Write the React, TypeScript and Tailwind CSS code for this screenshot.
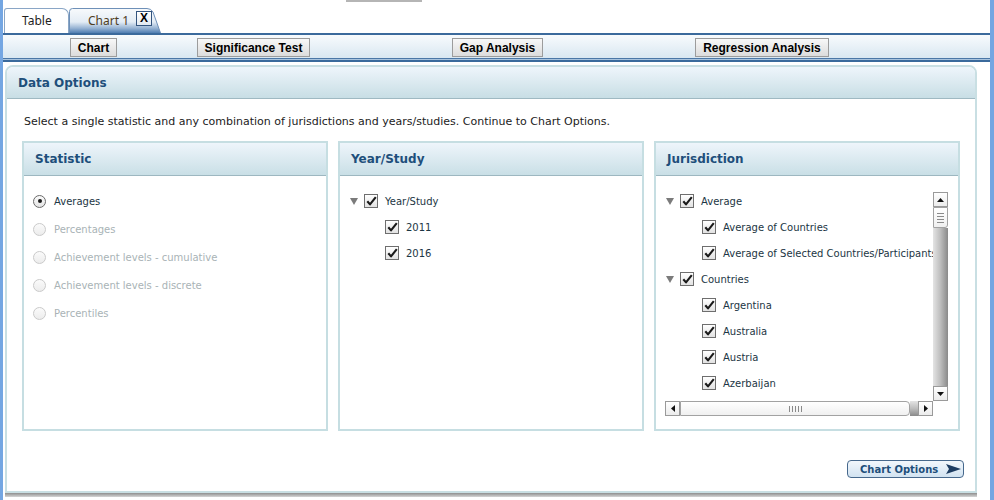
import React from "react";

const Check = () => (
  <span className="w-[14px] h-[14px] border border-[#6e6e6e] bg-gradient-to-b from-white to-[#e2e2e2] flex items-center justify-center shrink-0">
    <svg width="11" height="10" viewBox="0 0 11 10">
      <path d="M1.3 5.2 L4 8.4 L9.8 1.2" fill="none" stroke="#1a1a1a" strokeWidth="2.1" strokeLinejoin="round" />
    </svg>
  </span>
);

const Caret = () => (
  <svg width="8" height="7" viewBox="0 0 8 7" className="shrink-0">
    <polygon points="0,0 8,0 4,7" fill="#7b7b7b" />
  </svg>
);

const Radio = ({ on }: { on?: boolean }) => (
  <span
    className={
      on
        ? "w-[13px] h-[13px] rounded-full border border-[#6a6a6a] bg-gradient-to-b from-[#fbfbfb] to-[#e4e4e4] flex items-center justify-center shrink-0"
        : "w-[13px] h-[13px] rounded-full border border-[#cacaca] bg-gradient-to-b from-[#fbfbfb] to-[#ececec] flex items-center justify-center shrink-0"
    }
  >
    {on && <span className="w-[4px] h-[4px] rounded-full bg-[#1a1a1a]" />}
  </span>
);

const ToolButton = ({ label, className }: { label: string; className: string }) => (
  <button
    className={`h-[19px] border border-[#9c9c9c] bg-gradient-to-b from-[#f8f8f8] to-[#dcdcdc] font-['Liberation_Sans',Arial,sans-serif] font-bold text-[12px] leading-none text-black flex items-center justify-center ${className}`}
  >
    {label}
  </button>
);

const PanelHead = ({ title }: { title: string }) => (
  <div className="h-[33px] shrink-0 bg-gradient-to-b from-[#eef5fb] to-[#c9dfe6] border-b border-[#9db7c0] flex items-center pl-[11px]">
    <span className="font-bold text-[12px] text-[#1e4f7b]">{title}</span>
  </div>
);

const ParentRow = ({ label }: { label: string }) => (
  <div className="h-[18px] shrink-0 flex items-center">
    <Caret />
    <span className="ml-[6px]">
      <Check />
    </span>
    <span className="ml-[7px] whitespace-nowrap">{label}</span>
  </div>
);

const ChildRow = ({ label, indent }: { label: string; indent: string }) => (
  <div className={`h-[18px] shrink-0 flex items-center ${indent}`}>
    <Check />
    <span className="ml-[7px] whitespace-nowrap">{label}</span>
  </div>
);

const stats = [
  "Averages",
  "Percentages",
  "Achievement levels - cumulative",
  "Achievement levels - discrete",
  "Percentiles",
];

const VScroll = () => (
  <div className="w-[15px] h-[209px] flex flex-col">
    <div className="h-[15px] border border-[#9a9a9a] bg-gradient-to-b from-white to-[#ececec] flex items-center justify-center">
      <svg width="7" height="4" viewBox="0 0 7 4"><polygon points="0,4 7,4 3.5,0" fill="#111" /></svg>
    </div>
    <div className="h-[21px] border border-[#a2a2a2] rounded-br-[3px] bg-gradient-to-b from-white to-[#f0f0f0] flex flex-col items-center justify-center gap-[2px]">
      <span className="w-[7px] h-px bg-[#8a8a8a]" />
      <span className="w-[7px] h-px bg-[#8a8a8a]" />
      <span className="w-[7px] h-px bg-[#8a8a8a]" />
      <span className="w-[7px] h-px bg-[#8a8a8a]" />
    </div>
    <div className="flex-1 bg-gradient-to-r from-[#e4e4e4] via-[#bdbdbd] to-[#8a8a8a]" />
    <div className="h-[15px] border border-[#9a9a9a] bg-gradient-to-b from-white to-[#ececec] flex items-center justify-center">
      <svg width="7" height="4" viewBox="0 0 7 4"><polygon points="0,0 7,0 3.5,4" fill="#111" /></svg>
    </div>
  </div>
);

const HScroll = () => (
  <div className="w-[268px] h-[15px] flex">
    <div className="w-[15px] border border-[#9a9a9a] bg-gradient-to-b from-white to-[#ececec] flex items-center justify-center">
      <svg width="4" height="7" viewBox="0 0 4 7"><polygon points="4,0 4,7 0,3.5" fill="#111" /></svg>
    </div>
    <div className="w-[230px] border border-[#a2a2a2] rounded-r-[4px] bg-gradient-to-b from-white to-[#f0f0f0] flex items-center justify-center gap-[2px]">
      <span className="w-px h-[6px] bg-[#8a8a8a]" />
      <span className="w-px h-[6px] bg-[#8a8a8a]" />
      <span className="w-px h-[6px] bg-[#8a8a8a]" />
      <span className="w-px h-[6px] bg-[#8a8a8a]" />
      <span className="w-px h-[6px] bg-[#8a8a8a]" />
    </div>
    <div className="flex-1 bg-gradient-to-b from-[#e4e4e4] via-[#bdbdbd] to-[#8a8a8a]" />
    <div className="w-[15px] border border-[#9a9a9a] bg-gradient-to-b from-white to-[#ececec] flex items-center justify-center">
      <svg width="4" height="7" viewBox="0 0 4 7"><polygon points="0,0 0,7 4,3.5" fill="#111" /></svg>
    </div>
  </div>
);

export default function App() {
  return (
    <div className="w-[994px] h-[500px] bg-white border-l-[3px] border-r-[4px] border-[#74a6e2] overflow-hidden flex flex-col font-['DejaVu_Sans',Verdana,sans-serif]">
      {/* tab strip */}
      <div className="h-[33px] shrink-0">
        <div className="h-[2px] w-[76px] ml-[343px] bg-[#b5b5b5]" />
        <div className="mt-[6px] h-[25px] flex items-end pl-[1px] font-['Noto_Sans',sans-serif] text-[12px]">
          <div className="w-[65px] h-[25px] bg-white border border-b-0 border-[#8aa6c6] rounded-tl-[3px] rounded-tr-[7px] flex items-center pl-[17px] text-[#1e1e1e]">
            Table
          </div>
          <div className="relative w-[92px] h-[25px] flex items-center">
            <svg width="92" height="25" viewBox="0 0 92 25" className="absolute inset-0">
              <defs>
                <linearGradient id="tabg" x1="0" y1="0" x2="0" y2="1">
                  <stop offset="0" stopColor="#f8fafc" />
                  <stop offset="0.55" stopColor="#e3ecf5" />
                  <stop offset="0.8" stopColor="#98b4d4" />
                  <stop offset="1" stopColor="#4f7db1" />
                </linearGradient>
              </defs>
              <path d="M0.5 25 V3.5 Q0.5 0.5 3.5 0.5 H78 Q82 0.5 84 4 L91.5 25" fill="url(#tabg)" stroke="#6e90b8" />
            </svg>
            <span className="relative ml-[19px] text-[#4f3d1e]">Chart 1</span>
            <span className="relative ml-[7px] -mt-[5px] w-[16px] h-[15px] border border-[#33547e] bg-gradient-to-b from-white to-[#e3eaf2] flex items-center justify-center font-['Liberation_Sans',Arial,sans-serif] font-bold text-[12px] leading-none text-black">
              X
            </span>
          </div>
        </div>
      </div>

      {/* toolbar */}
      <div className="shrink-0 border-t-2 border-[#3b6a9c]">
        <div className="h-[23px] bg-gradient-to-b from-[#f8fbfd] to-[#d9e7f1] flex items-start pt-[3px]">
          <ToolButton label="Chart" className="ml-[67px] w-[47px]" />
          <ToolButton label="Significance Test" className="ml-[80px] w-[113px]" />
          <ToolButton label="Gap Analysis" className="ml-[142px] w-[91px]" />
          <ToolButton label="Regression Analysis" className="ml-[152px] w-[134px]" />
        </div>
        <div className="h-px bg-[#4b77a6]" />
        <div className="h-px bg-[#a9c4de]" />
        <div className="h-[2px] bg-[#3b6a9c]" />
      </div>

      {/* data options panel */}
      <div className="mt-[3px] ml-[2px] w-[972px] h-[428px] shrink-0 border-2 border-[#c9dfe3] rounded-t-[8px] flex flex-col bg-white">
        <div className="h-[32px] shrink-0 rounded-t-[6px] bg-gradient-to-b from-[#eef5fb] to-[#c8dee5] border-b border-[#9fb9c2] flex items-center pl-[11px]">
          <span className="font-bold text-[12px] text-[#1e4f7b]">Data Options</span>
        </div>
        <div className="flex-1 flex flex-col">
          <p className="mt-[16px] ml-[17px] text-[11px] leading-[14px] text-[#222]">
            Select a single statistic and any combination of jurisdictions and years/studies. Continue to Chart Options.
          </p>
          <div className="mt-[12px] ml-[15px] flex gap-[10px]">
            {/* Statistic */}
            <div className="w-[306px] h-[290px] border-2 border-[#c6dee2] flex flex-col">
              <PanelHead title="Statistic" />
              <div className="pt-4 pl-[9px] flex flex-col gap-[10px] text-[10px]">
                {stats.map((s, i) => (
                  <div key={s} className="h-[18px] flex items-center">
                    <Radio on={i === 0} />
                    <span className={i === 0 ? "ml-[8px] text-[#1c3644]" : "ml-[8px] text-[#a9b3b6]"}>{s}</span>
                  </div>
                ))}
              </div>
            </div>

            {/* Year/Study */}
            <div className="w-[306px] h-[290px] border-2 border-[#c6dee2] flex flex-col">
              <PanelHead title="Year/Study" />
              <div className="pt-4 pl-[10px] flex flex-col gap-2 text-[10px] text-[#1c3644]">
                <ParentRow label="Year/Study" />
                <ChildRow label="2011" indent="pl-[35px]" />
                <ChildRow label="2016" indent="pl-[35px]" />
              </div>
            </div>

            {/* Jurisdiction */}
            <div className="w-[306px] h-[290px] border-2 border-[#c6dee2] flex flex-col">
              <PanelHead title="Jurisdiction" />
              <div className="pt-4 pl-[9px] text-[10px] text-[#1c3644]">
                <div className="w-[283px] grid grid-cols-[268px_15px] grid-rows-[209px_15px]">
                  <div className="overflow-hidden pl-px flex flex-col gap-2">
                    <ParentRow label="Average" />
                    <ChildRow label="Average of Countries" indent="pl-[36px]" />
                    <ChildRow label="Average of Selected Countries/Participants" indent="pl-[36px]" />
                    <ParentRow label="Countries" />
                    <ChildRow label="Argentina" indent="pl-[36px]" />
                    <ChildRow label="Australia" indent="pl-[36px]" />
                    <ChildRow label="Austria" indent="pl-[36px]" />
                    <ChildRow label="Azerbaijan" indent="pl-[36px]" />
                  </div>
                  <VScroll />
                  <HScroll />
                  <div />
                </div>
              </div>
            </div>
          </div>

          <div className="mt-[29px] mr-[11px] self-end">
            <button className="w-[117px] h-[18px] rounded-[4px] border border-[#46688c] bg-gradient-to-b from-[#f2f7fc] to-[#d2e3f1] flex items-center pl-[12px] text-[10px] font-bold text-[#1e4f7b]">
              Chart Options
              <svg width="15" height="10" viewBox="0 0 15 10" className="ml-[8px]">
                <polygon points="0,0 15,5 0,10 3,5" fill="#1d3d62" />
              </svg>
            </button>
          </div>
        </div>
      </div>
      <div className="ml-[2px] w-[972px] h-[4px] shrink-0 bg-gradient-to-b from-[#8e8e8e] to-[#d6d6d6]" />
    </div>
  );
}
